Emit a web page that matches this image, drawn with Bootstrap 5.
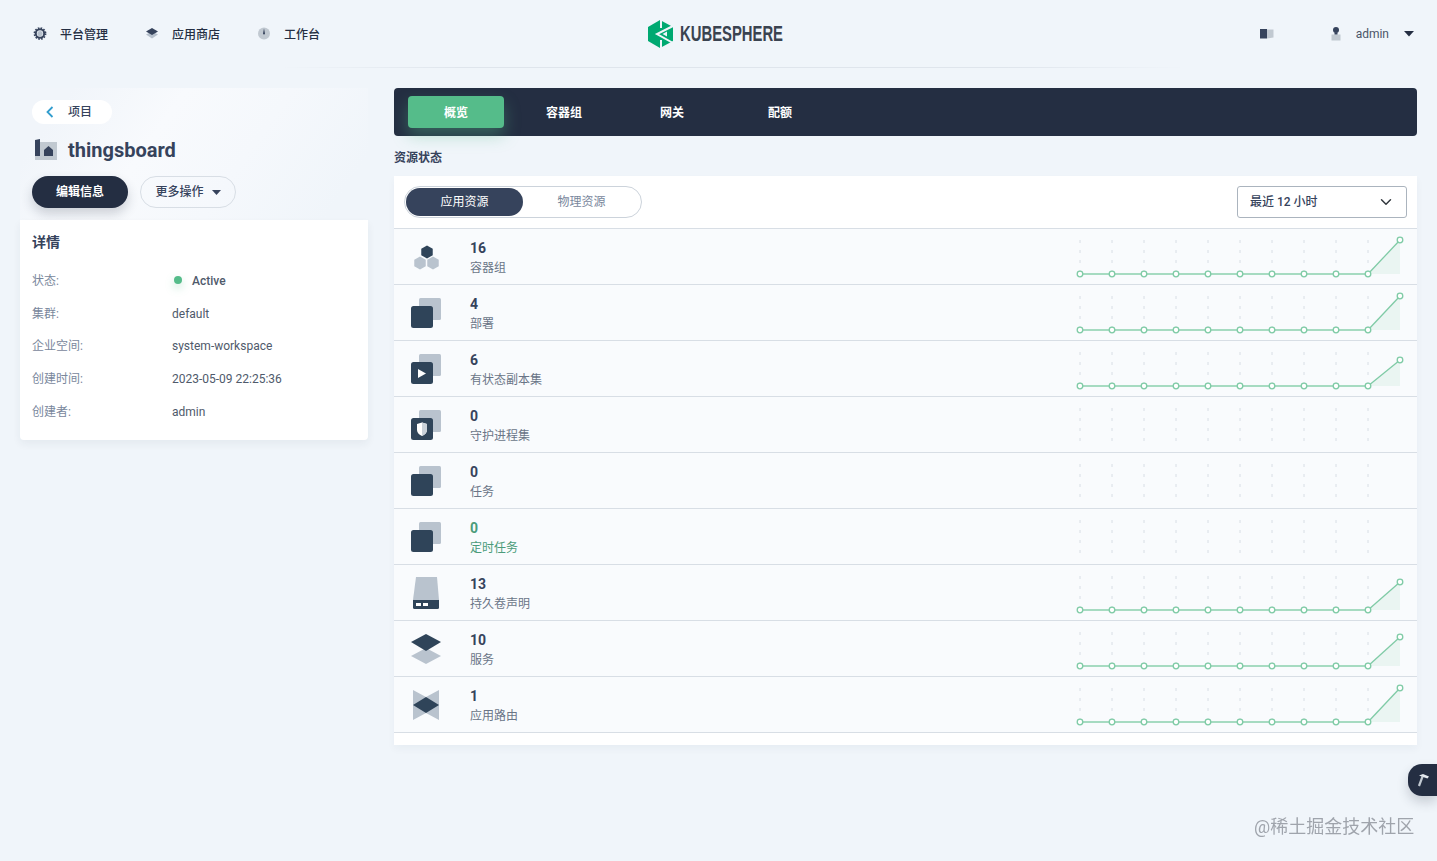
<!DOCTYPE html>
<html lang="en">
<head>
  <meta charset="UTF-8">
  <meta name="viewport" content="width=device-width, initial-scale=1.0">
  <title>thingsboard - KubeSphere</title>
  <link href="https://cdn.jsdelivr.net/npm/bootstrap@5.3.3/dist/css/bootstrap.min.css" rel="stylesheet" crossorigin="anonymous">
  <style>
    body { background: #f0f5fa; font-family: Roboto, "Noto Sans CJK SC", sans-serif; font-size: 12px; color: #36435c; height: 861px; overflow: hidden; }
    .top-head { height: 67px; padding: 0 23px 0 32px; }
    .top-link { width: 112px; gap: 12px; font-weight: 500; color: #242e42; text-decoration: none; }
    .top-link span { margin-top: 2px; }
    .logo-box { left: 646px; height: 67px; }
    .user-ico { margin-left: 53px; }
    .user-name { margin-left: 12px; color: #4a5568; }
    .user-caret { margin-left: 15px; }
    .top-line { height: 1px; width: 905px; margin-left: 280px; background: linear-gradient(90deg, #f0f5fa, #dfe5ec 20%, #dfe5ec 80%, #f0f5fa); }
    .page-body { padding: 20px 20px 0; gap: 26px; }
    .side-col { width: 348px; flex: none; }
    .side-top { height: 132px; padding: 12px 12px 0; background: linear-gradient(125deg, #f1f5fa 12%, #f8fafd 38%, #f5f8fc 62%, #f0f5fa 90%); }
    .back-pill { width: 80px; height: 24px; background: #fff; border-radius: 12px; padding-left: 14px; gap: 14px; color: #36435c; font-weight: 500; text-decoration: none; }
    .proj-title { margin: 15px 0 15px 3px; gap: 11px; height: 22px; }
    .proj-title h1 { font-size: 20px; font-weight: 700; margin: 0; color: #36435c; font-family: Roboto, sans-serif; line-height: 22px; }
    .side-btns { gap: 12px; }
    .pill-btn { width: 96px; height: 32px; border-radius: 16px; font-size: 12px; font-weight: 700; padding: 0; }
    .pill-dark { background: #242e42; color: #fff; border: 0; box-shadow: 0 6px 12px rgba(36, 46, 66, .2); }
    .pill-dark:hover { background: #242e42; color: #fff; }
    .pill-light { background: transparent; color: #36435c; border: 1px solid #d8dee5; font-weight: 500; }
    .side-info { height: 220px; background: #fff; border: 0; border-radius: 0 0 4px 4px; box-shadow: 0 4px 8px rgba(36, 46, 66, .06); padding: 12px 12px 0; }
    .side-info h2 { font-size: 14px; font-weight: 700; margin: 0 0 13px; line-height: 20px; color: #36435c; }
    .info-line { height: 32.6px; }
    .info-key { width: 140px; color: #79879c; }
    .info-val { color: #4f5a6b; }
    .info-strong { font-weight: 500; }
    .dot-live { width: 8px; height: 8px; border-radius: 50%; background: #55bc8a; box-shadow: 0 4px 8px rgba(85, 188, 138, .35); margin: -2px 10px 0 2px; }
    .main-col { flex: 1; min-width: 0; }
    .tab-bar { height: 48px; background: #242e42; border-radius: 4px; padding: 8px 14px; gap: 12px; }
    .tab-bar .nav-link { width: 96px; height: 32px; padding: 0; line-height: 34px; text-align: center; color: #fff; font-weight: 700; font-size: 12px; border-radius: 4px; }
    .tab-bar .nav-link.active { background: #55bc8a; box-shadow: 0 8px 16px rgba(85, 188, 138, .36); }
    .sect-title { font-size: 12px; font-weight: 700; line-height: 20px; margin: 12px 0 8px; color: #36435c; }
    .res-card { border: 0; border-radius: 0; background: #fff; height: 569px; box-shadow: 0 4px 8px rgba(36, 46, 66, .04); }
    .res-head { height: 53px; padding: 0 10px; border-bottom: 1px solid #d8dee5; }
    .toggle-wrap { width: 238px; height: 32px; border: 1px solid #ccd3db; border-radius: 16px; padding: 1px; }
    .toggle-wrap span { width: 117px; height: 28px; line-height: 28px; text-align: center; border-radius: 14px; color: #79879c; }
    .toggle-wrap .on { background: #36435c; color: #fff; }
    .range-pick { width: 170px; height: 32px; font-size: 12px; font-weight: 500; color: #36435c; border-color: #abb4be; border-radius: 3px; padding: 0 30px 0 12px; font-family: Roboto, "Noto Sans CJK SC", sans-serif; }
    .res-row { height: 56px; background: #f9fbfd; border-bottom: 1px solid #d8dee5; padding-left: 16px; }
    .res-ico { width: 32px; height: 32px; flex: none; }
    .res-text { margin-left: 28px; padding-top: 3px; }
    .res-num { font-size: 14px; font-weight: 700; line-height: 18px; color: #36435c; }
    .res-name { line-height: 20px; margin-top: 1px; color: #6a7587; }
    .res-row.is-hover .res-num, .res-row.is-hover .res-name { color: #4b9b7a; }
    .res-spark { margin-left: auto; margin-right: 7px; width: 340px; height: 56px; flex: none; }
    .tool-tab { position: fixed; right: 0; top: 764px; width: 29px; height: 32px; background: #242e42; border-radius: 14px 0 0 14px; box-shadow: 0 6px 12px rgba(36, 46, 66, .2); }
    .water-mark { position: fixed; left: 1254px; top: 814px; font-size: 18px; line-height: 26px; color: rgba(110, 115, 125, .62); white-space: nowrap; }
  </style>
</head>
<body>
  <header class="top-head d-flex align-items-center position-relative">
    <a class="top-link d-flex align-items-center" href="#">
      <svg width="16" height="16" viewBox="0 0 16 16"><circle cx="8" cy="7.5" r="4.2" fill="none" stroke="#36435c" stroke-width="2"/><circle cx="8" cy="7.5" r="5.6" fill="none" stroke="#36435c" stroke-width="1.6" stroke-dasharray="1.6 1.33"/><circle cx="8" cy="7.5" r="2.6" fill="#b6c0cc"/></svg>
      <span>平台管理</span>
    </a>
    <a class="top-link d-flex align-items-center" href="#">
      <svg width="16" height="16" viewBox="0 0 16 16"><path d="M2 8.5 8 5.5 14 8.5 8 12.5Z" fill="#b6c0cc"/><path d="M2 5.5 8 2 14 5.5 8 9Z" fill="#36435c"/></svg>
      <span>应用商店</span>
    </a>
    <a class="top-link d-flex align-items-center" href="#">
      <svg width="16" height="16" viewBox="0 0 16 16"><circle cx="8" cy="7.5" r="6" fill="#c1c9d1"/><path d="M8 2.5 9 7.5A1 1 0 0 1 7 7.5Z" fill="#36435c"/></svg>
      <span>工作台</span>
    </a>
    <div class="logo-box position-absolute top-0 d-flex align-items-center">
      <svg width="200" height="32" viewBox="0 0 200 32">
        <path d="M14 2 27 9V23L14 30 2 23V9Z" fill="#00a971"/>
        <path d="M15 0V10M27 8 11 16 27 25M15 22V32" fill="none" stroke="#f0f5fa" stroke-width="2"/>
        <path d="M21 13.5 16.5 16 21 18.5Z" fill="#f0f5fa"/>
        <text x="34" y="23" textLength="103" lengthAdjust="spacingAndGlyphs" font-family="'Liberation Sans Narrow','Liberation Sans',sans-serif" font-size="22" font-weight="700" fill="#3a4350">KUBESPHERE</text>
      </svg>
    </div>
    <div class="ms-auto d-flex align-items-center">
      <svg width="16" height="16" viewBox="0 0 16 16"><path d="M8 3.5 14.5 3.5V11.5L8 12.5Z" fill="#c1c9d1"/><path d="M1 3H8V12.5H1Z" fill="#36435c"/></svg>
      <svg class="user-ico" width="16" height="16" viewBox="0 0 16 16"><circle cx="8" cy="4" r="3" fill="#36435c"/><path d="M3.5 8.5H12.5V14.5H3.5Z" fill="#c1c9d1"/><path d="M6.5 6.5H9.5V8.5H6.5Z" fill="#36435c"/></svg>
      <span class="user-name">admin</span>
      <svg class="user-caret" width="10" height="6" viewBox="0 0 10 6"><path d="M0 0H10L5 5.5Z" fill="#242e42"/></svg>
    </div>
  </header>
  <div class="top-line"></div>

  <main class="page-body d-flex align-items-start">
    <aside class="side-col">
      <div class="side-top">
        <a class="back-pill d-inline-flex align-items-center" href="#">
          <svg width="8" height="12" viewBox="0 0 8 12"><path d="M6.5 1 1.5 6 6.5 11" fill="none" stroke="#329dce" stroke-width="1.8"/></svg>
          <span>项目</span>
        </a>
        <div class="proj-title d-flex align-items-center">
          <svg width="22" height="22" viewBox="0 0 22 22"><path d="M0 3H22V21H0Z" fill="#c1c9d1"/><path d="M0 1 5 0V17H0Z" fill="#36435c"/><path d="M9 17V11L13.5 7 18 11V17Z" fill="#36435c"/></svg>
          <h1>thingsboard</h1>
        </div>
        <div class="side-btns d-flex">
          <button class="btn pill-btn pill-dark" type="button">编辑信息</button>
          <button class="btn pill-btn pill-light d-inline-flex align-items-center justify-content-center gap-2" type="button">更多操作 <svg width="9" height="5" viewBox="0 0 9 5"><path d="M0 0H9L4.5 5Z" fill="#36435c"/></svg></button>
        </div>
      </div>
      <div class="card side-info">
        <h2>详情</h2>
        <div class="info-line d-flex align-items-center"><span class="info-key">状态:</span><span class="dot-live"></span><strong class="info-val info-strong">Active</strong></div>
        <div class="info-line d-flex align-items-center"><span class="info-key">集群:</span><span class="info-val">default</span></div>
        <div class="info-line d-flex align-items-center"><span class="info-key">企业空间:</span><span class="info-val">system-workspace</span></div>
        <div class="info-line d-flex align-items-center"><span class="info-key">创建时间:</span><span class="info-val">2023-05-09 22:25:36</span></div>
        <div class="info-line d-flex align-items-center"><span class="info-key">创建者:</span><span class="info-val">admin</span></div>
      </div>
    </aside>

    <section class="main-col">
      <ul class="nav tab-bar">
        <li class="nav-item"><a class="nav-link active" href="#">概览</a></li>
        <li class="nav-item"><a class="nav-link" href="#">容器组</a></li>
        <li class="nav-item"><a class="nav-link" href="#">网关</a></li>
        <li class="nav-item"><a class="nav-link" href="#">配额</a></li>
      </ul>
      <div class="sect-title">资源状态</div>
      <div class="card res-card">
        <div class="res-head d-flex align-items-center justify-content-between">
          <div class="toggle-wrap d-flex"><span class="on">应用资源</span><span>物理资源</span></div>
          <select class="form-select range-pick"><option>最近 12 小时</option></select>
        </div>
        <div id="resRows"></div>
      </div>
    </section>
  </main>

  <div class="tool-tab d-flex align-items-center justify-content-center">
    <svg width="16" height="16" viewBox="0 0 16 16"><path d="M4 14 7.5 4.5" stroke="#c1c9d1" stroke-width="2.2" fill="none"/><path d="M4 3.5 8 2 14 4.5 12.5 6.5 8 5Z" fill="#e3e8ee"/></svg>
  </div>
  <div class="water-mark">@稀土掘金技术社区</div>

  <script>
    const DARK = '#2f4459';
    const LIGHT = '#b9c3ce';
    const squares = (inner) => `<rect x="9" y="1" width="22" height="22" rx="1.5" fill="${LIGHT}"/><rect x="1" y="9" width="22" height="22" rx="2.5" fill="${DARK}"/>${inner || ''}`;
    const hex = (cx, cy, r, fill) => `<polygon points="${cx},${cy - r} ${cx + r * .87},${cy - r / 2} ${cx + r * .87},${cy + r / 2} ${cx},${cy + r} ${cx - r * .87},${cy + r / 2} ${cx - r * .87},${cy - r / 2}" fill="${fill}"/>`;

    const icons = {
      pod: hex(10, 22, 6.6, LIGHT) + hex(23, 22, 6.6, LIGHT) + hex(17, 11, 6.6, DARK),
      deploy: squares(),
      sts: squares('<polygon points="8,16 8,25 16,20.5" fill="#fff"/>'),
      ds: squares('<path d="M7 15 12 13.5 17 15V21C17 24 14.5 26 12 27 9.5 26 7 24 7 21Z" fill="#fff"/><path d="M12 13.5 17 15V21C17 24 14.5 26 12 27Z" fill="#c9d1d9"/>'),
      pvc: `<polygon points="6,0 27,0 29,23 3,23" fill="${LIGHT}"/><path d="M3 23H29V30.5A1.5 1.5 0 0 1 27.5 32H4.5A1.5 1.5 0 0 1 3 30.5Z" fill="${DARK}"/><rect x="6" y="26" width="5" height="3" fill="#fff"/><rect x="13" y="26" width="5" height="3" fill="#fff"/>`,
      svc: `<polygon points="1,23 16,15 31,23 16,31" fill="${LIGHT}"/><polygon points="1,9 16,1 31,9 16,18" fill="${DARK}"/>`,
      ing: `<polygon points="3,1 16,8 29,1 29,31 16,24 3,31" fill="${LIGHT}"/><polygon points="3,16 16,8 29,16 16,24" fill="${DARK}"/>`
    };

    // top: y of the last point inside the row, null when the series is empty
    const resources = [
      { num: 16, name: '容器组', icon: 'pod', top: 11 },
      { num: 4, name: '部署', icon: 'deploy', top: 11 },
      { num: 6, name: '有状态副本集', icon: 'sts', top: 19 },
      { num: 0, name: '守护进程集', icon: 'ds', top: null },
      { num: 0, name: '任务', icon: 'deploy', top: null },
      { num: 0, name: '定时任务', icon: 'deploy', top: null, hover: true },
      { num: 13, name: '持久卷声明', icon: 'pvc', top: 17 },
      { num: 10, name: '服务', icon: 'svc', top: 16 },
      { num: 1, name: '应用路由', icon: 'ing', top: 11 }
    ];

    function sparkLine(top) {
      const base = 45;
      let out = '';
      for (let i = 0; i < 10; i++) {
        const x = 10 + i * 32;
        out += `<line x1="${x}" y1="11" x2="${x}" y2="${base}" stroke="#d8dee5" stroke-dasharray="3 7"/>`;
      }
      if (top === null) return out;
      out += `<polygon points="298,${base} 330,${top} 330,${base}" fill="#55bc8a" fill-opacity=".09"/>`;
      out += `<line x1="10" y1="${base}" x2="298" y2="${base}" stroke="#a6dbc1" stroke-width="2"/>`;
      out += `<line x1="298" y1="${base}" x2="330" y2="${top}" stroke="#7fcba6" stroke-width="1.3"/>`;
      for (let i = 0; i < 11; i++) {
        const x = 10 + i * 32;
        out += `<circle cx="${x}" cy="${i === 10 ? top : base}" r="2.8" fill="#fff" stroke="#7fcba6" stroke-width="1.3"/>`;
      }
      return out;
    }

    document.getElementById('resRows').innerHTML = resources.map((r) => `
      <div class="res-row d-flex align-items-center ${r.hover ? 'is-hover' : ''}">
        <svg class="res-ico" viewBox="0 0 32 32">${icons[r.icon]}</svg>
        <div class="res-text">
          <div class="res-num">${r.num}</div>
          <div class="res-name">${r.name}</div>
        </div>
        <svg class="res-spark" viewBox="0 0 340 56">${sparkLine(r.top)}</svg>
      </div>`).join('');
  </script>
  <script src="https://cdn.jsdelivr.net/npm/bootstrap@5.3.3/dist/js/bootstrap.bundle.min.js" crossorigin="anonymous"></script>
</body>
</html>
